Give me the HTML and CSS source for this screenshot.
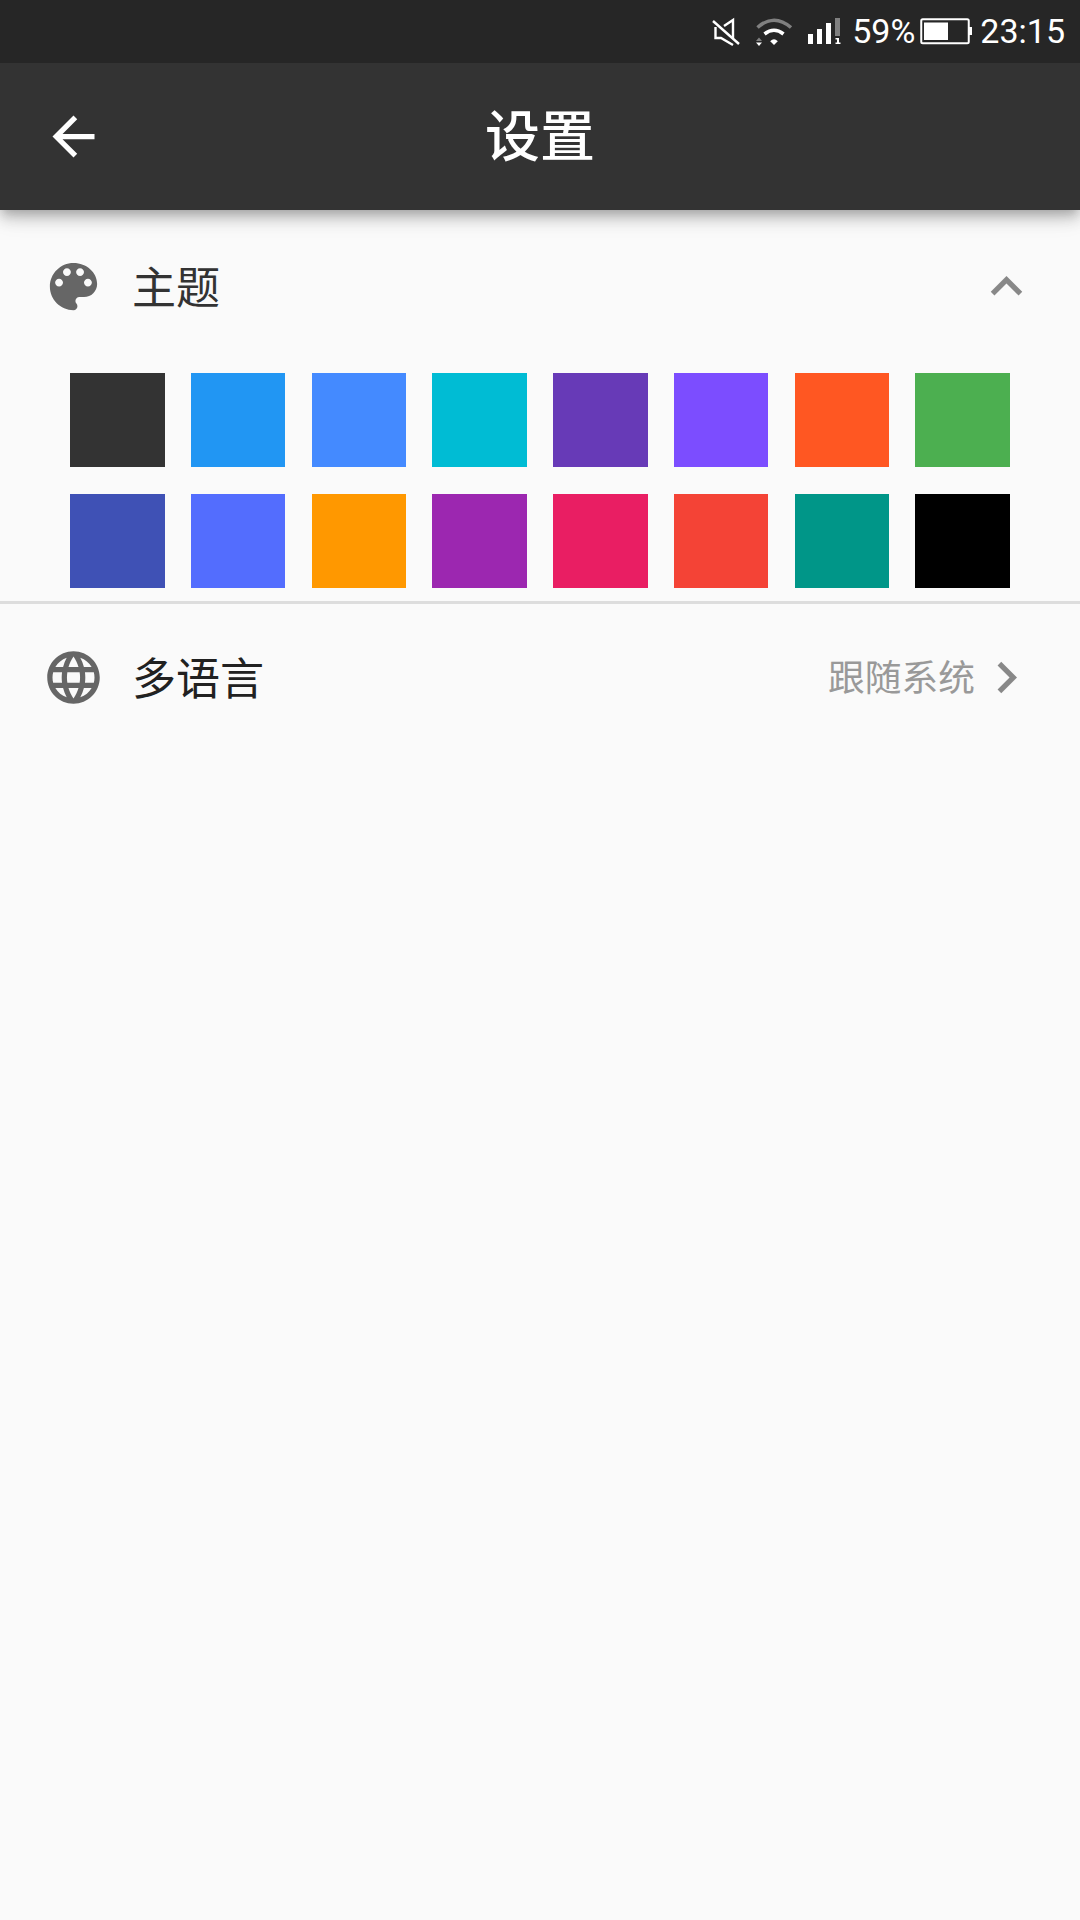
FILE: index.html
```html
<!DOCTYPE html>
<html lang="zh-CN">
<head>
    <meta charset="UTF-8">
    <meta name="viewport" content="width=device-width, initial-scale=1.0">
    <title>设置</title>
    <link rel="stylesheet" href="styles.css">
</head>
<body>
    <div class="status-bar">
        <svg class="status-mute" viewBox="0 0 30 30">
            <path d="M4.500 10v11H10l12 7M22 21V3l-9 6" />
            <path d="M2 4l26 23" />
        </svg>
        <svg class="status-wifi" viewBox="0 0 38 28">
            <path class="dim-stroke" d="M2.500 9.500Q19-5 36 9.500" />
            <path class="bright-stroke" d="M9.500 16Q19 8.500 28.500 16" />
            <path class="bright" d="M15.200 23.200Q19 19.500 22.800 23.200L19 27z" />
            <path class="dim" d="M1 23L4 19.500L7 23z" />
            <path class="bright" d="M1 24.500h6L4 28z" />
        </svg>
        <svg class="status-signal" viewBox="0 0 33 27">
            <path class="bright" d="M0 16h5v10H0zM9 11h5v15H9zM18 5h5v21h-5z" />
            <path class="dim" d="M27 0h5v18h-5z" />
            <path class="bright" d="M27.500 20h3.500v4.500h1.500V26h-5v-1.500H29V21.500h-1.500z" />
        </svg>
        <span class="status-percent">59%</span>
        <svg class="status-battery" viewBox="0 0 53 27">
            <rect class="battery-frame" x="1.250" y="1.250" width="47.500" height="24" rx="1.500" />
            <path class="bright" d="M4 4.500h24v17.500H4zM49 9h3v8h-3z" />
        </svg>
        <span class="status-time">23:15</span>
    </div>

    <header class="app-bar">
        <svg class="icon back" viewBox="0 0 24 24">
            <path d="M20 11H7.830l5.590-5.590L12 4l-8 8 8 8 1.410-1.410L7.830 13H20v-2z" />
        </svg>
        <h1 class="title">设置</h1>
    </header>

    <main>
        <section class="theme">
            <div class="tile theme-tile">
                <svg class="icon" viewBox="0 0 24 24">
                    <path d="M12 3c-4.970 0-9 4.030-9 9s4.030 9 9 9c.83 0 1.500-.67 1.500-1.500 0-.39-.15-.74-.39-1.010-.23-.26-.38-.61-.38-.99 0-.83.67-1.500 1.500-1.500H16c2.760 0 5-2.240 5-5 0-4.420-4.030-8-9-8zm-5.500 9c-.83 0-1.500-.67-1.500-1.500S5.670 9 6.500 9 8 9.670 8 10.500 7.330 12 6.500 12zm3-4C8.670 8 8 7.330 8 6.500S8.670 5 9.500 5s1.500.67 1.500 1.500S10.330 8 9.500 8zm5 0c-.83 0-1.500-.67-1.500-1.500S13.670 5 14.500 5s1.500.67 1.500 1.500S15.330 8 14.500 8zm3 4c-.83 0-1.500-.67-1.500-1.500S16.670 9 17.500 9s1.500.67 1.500 1.500-.67 1.500-1.500 1.500z" />
                </svg>
                <span class="label">主题</span>
                <svg class="icon arrow" viewBox="0 0 24 24">
                    <path d="M12 8l-6 6 1.410 1.410L12 10.830l4.590 4.580L18 14z" />
                </svg>
            </div>
            <div class="swatches">
                <div class="swatch dark"></div>
                <div class="swatch blue"></div>
                <div class="swatch blue-accent"></div>
                <div class="swatch cyan"></div>
                <div class="swatch deep-purple"></div>
                <div class="swatch deep-purple-accent"></div>
                <div class="swatch deep-orange"></div>
                <div class="swatch green"></div>
                <div class="swatch indigo"></div>
                <div class="swatch indigo-accent"></div>
                <div class="swatch orange"></div>
                <div class="swatch purple"></div>
                <div class="swatch pink"></div>
                <div class="swatch red"></div>
                <div class="swatch teal"></div>
                <div class="swatch black"></div>
            </div>
        </section>

        <div class="tile">
            <svg class="icon" viewBox="0 0 24 24">
                <path d="M11.990 2C6.470 2 2 6.480 2 12s4.470 10 9.990 10C17.520 22 22 17.520 22 12S17.520 2 11.990 2zm6.930 6h-2.950c-.32-1.250-.78-2.450-1.380-3.560 1.840.63 3.370 1.910 4.330 3.560zM12 4.040c.83 1.200 1.480 2.530 1.910 3.960h-3.820c.43-1.430 1.080-2.760 1.910-3.960zM4.260 14C4.100 13.360 4 12.690 4 12s.1-1.360.26-2h3.380c-.08.66-.14 1.320-.14 2 0 .68.06 1.340.14 2H4.260zm.82 2h2.950c.32 1.250.78 2.450 1.380 3.560-1.840-.63-3.370-1.900-4.330-3.560zm2.950-8H5.080c.96-1.660 2.490-2.930 4.330-3.560C8.810 5.550 8.350 6.750 8.030 8zM12 19.960c-.83-1.200-1.480-2.530-1.910-3.960h3.820c-.43 1.430-1.080 2.760-1.910 3.960zM14.340 14H9.660c-.09-.66-.16-1.320-.16-2 0-.68.07-1.350.16-2h4.680c.09.65.16 1.320.16 2 0 .68-.07 1.340-.16 2zm.25 5.560c.6-1.110 1.060-2.310 1.380-3.560h2.950c-.96 1.650-2.490 2.930-4.330 3.560zM16.360 14c.08-.66.14-1.320.14-2 0-.68-.06-1.340-.14-2h3.380c.16.64.26 1.310.26 2s-.1 1.360-.26 2h-3.380z" />
            </svg>
            <span class="label strong">多语言</span>
            <span class="value">跟随系统</span>
            <svg class="icon arrow" viewBox="0 0 24 24">
                <path d="M10 6L8.590 7.410 13.170 12l-4.580 4.590L10 18l6-6z" />
            </svg>
        </div>
    </main>
</body>
</html>
```

FILE: styles.css
```css
body {
    font-family: Roboto, 'Noto Sans CJK SC', sans-serif;
    background-color: #fafafa;
    margin: 0;
    min-height: 100vh;
}

/* Status bar */
.status-bar {
    position: relative;
    z-index: 1;
    display: flex;
    align-items: center;
    justify-content: flex-end;
    height: 63px;
    padding-right: 15px;
    box-sizing: border-box;
    background-color: #262626;
    color: #fff;
    font-size: 34px;
    line-height: 63px;
}

.status-mute {
    width: 30px;
    height: 30px;
    margin-right: 14px;
    fill: none;
    stroke: #fff;
    stroke-width: 2.4;
}

.status-wifi {
    width: 38px;
    height: 28px;
    margin-right: 15px;
}

.status-signal {
    width: 33px;
    height: 27px;
    margin-right: 11px;
}

.status-battery {
    width: 53px;
    height: 27px;
    margin: 0 7px 0 5px;
}

.bright {
    fill: #fff;
}

.dim {
    fill: #808080;
}

.bright-stroke,
.dim-stroke {
    fill: none;
    stroke: #fff;
    stroke-width: 3.6;
}

.dim-stroke {
    stroke: #808080;
}

.battery-frame {
    fill: none;
    stroke: #fff;
    stroke-width: 2;
}

/* App bar */
.app-bar {
    display: grid;
    grid-template-columns: 63px 1fr 63px;
    align-items: center;
    height: 147px;
    padding: 0 42px;
    background-color: #333;
    color: #fff;
    box-shadow: 0 5px 10px -3px rgba(0, 0, 0, 0.2),
                0 10px 13px 0 rgba(0, 0, 0, 0.14),
                0 3px 26px 0 rgba(0, 0, 0, 0.12);
}

.title {
    margin: 0;
    padding-top: 2px;
    font-size: 55px;
    font-weight: 500;
    line-height: 145px;
    text-align: center;
}

.icon {
    display: block;
    flex: none;
    width: 63px;
    height: 63px;
    fill: #666;
}

.back {
    fill: #fff;
}

.arrow {
    fill: #888;
}

/* Settings list */
.tile {
    display: flex;
    align-items: center;
    height: 147px;
    padding: 0 42px;
}

.label {
    flex: 1;
    margin-left: 27px;
    padding-bottom: 4px;
    color: #333;
    font-size: 44px;
}

.label.strong {
    padding-bottom: 3px;
    color: #212121;
}

.value {
    padding-bottom: 5px;
    color: #999;
    font-size: 36.75px;
}

.theme {
    padding-bottom: 13px;
    border-bottom: 3px solid #ddd;
}

.theme-tile {
    height: 153px;
}

.swatches {
    display: grid;
    grid-template-columns: repeat(8, 94.5px);
    grid-auto-rows: 94.5px;
    gap: 26.25px;
    justify-content: center;
    padding-top: 9.75px;
}

.dark { background-color: #333; }
.blue { background-color: #2196f3; }
.blue-accent { background-color: #448aff; }
.cyan { background-color: #00bcd4; }
.deep-purple { background-color: #673ab7; }
.deep-purple-accent { background-color: #7c4dff; }
.deep-orange { background-color: #ff5722; }
.green { background-color: #4caf50; }
.indigo { background-color: #3f51b5; }
.indigo-accent { background-color: #536dfe; }
.orange { background-color: #ff9800; }
.purple { background-color: #9c27b0; }
.pink { background-color: #e91e63; }
.red { background-color: #f44336; }
.teal { background-color: #009688; }
.black { background-color: #000; }
```
